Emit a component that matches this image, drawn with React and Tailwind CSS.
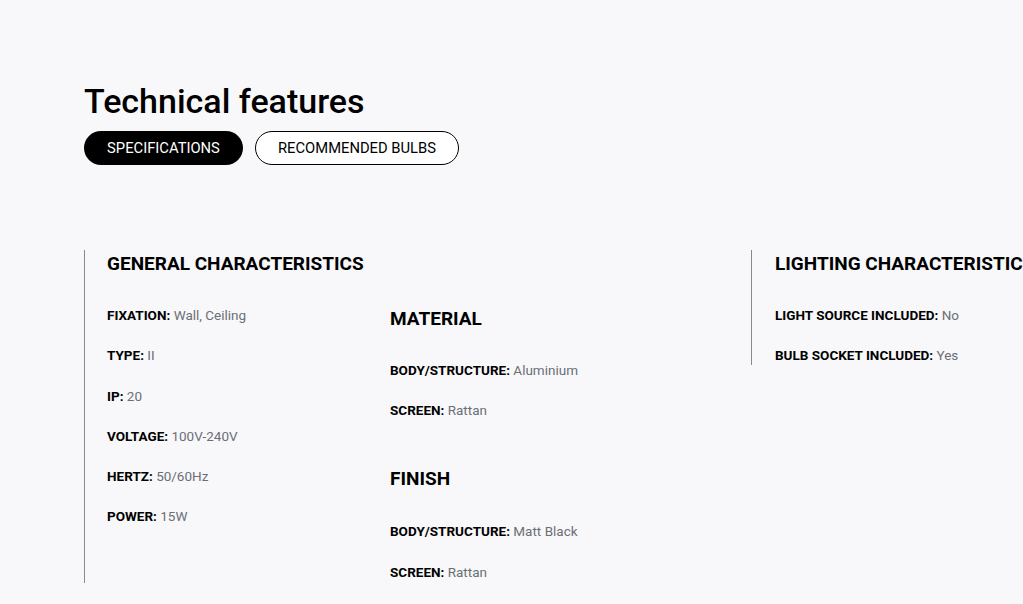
const general = [
  ['FIXATION', 'Wall, Ceiling'],
  ['TYPE', 'II'],
  ['IP', '20'],
  ['VOLTAGE', '100V-240V'],
  ['HERTZ', '50/60Hz'],
  ['POWER', '15W'],
];

const material = [
  ['BODY/STRUCTURE', 'Aluminium'],
  ['SCREEN', 'Rattan'],
];

const finish = [
  ['BODY/STRUCTURE', 'Matt Black'],
  ['SCREEN', 'Rattan'],
];

const lighting = [
  ['LIGHT SOURCE INCLUDED', 'No'],
  ['BULB SOCKET INCLUDED', 'Yes'],
];

function Item({ label, value }) {
  return (
    <p className="text-[13.5px] leading-5 whitespace-nowrap">
      <span className="font-bold text-black">{label}:</span>{' '}
      <span className="text-[#6b6f76]">{value}</span>
    </p>
  );
}

function ItemList({ items }) {
  return (
    <div className="flex flex-col gap-[20.3px]">
      {items.map(([label, value]) => (
        <Item key={label} label={label} value={value} />
      ))}
    </div>
  );
}

function Heading({ children }) {
  return <h3 className="text-[19px] leading-6 font-bold text-black whitespace-nowrap">{children}</h3>;
}

export default function App() {
  const font = { fontFamily: 'Roboto, "Liberation Sans", sans-serif' };

  return (
    <div className="min-h-[604px] w-[1023px] overflow-hidden bg-[#f8f8fa] pl-[84px] pt-[81px]" style={font}>
      <h1 className="text-[34px] leading-10 font-medium text-black">Technical features</h1>
      <div className="flex gap-3 mt-[10px]">
        <button className="h-[34px] w-[159px] rounded-full bg-black text-white text-[14.75px]">SPECIFICATIONS</button>
        <button className="h-[34px] w-[204px] rounded-full border border-black bg-white text-black text-[14.75px]">RECOMMENDED BULBS</button>
      </div>

      <div className="flex items-start mt-[85px]">
        <section className="w-[667px] shrink-0 border-l border-[#8a8a8a] pl-[22px] pt-[2px]">
          <Heading>GENERAL CHARACTERISTICS</Heading>
          <div className="flex mt-[29px]">
            <div className="w-[283px] shrink-0">
              <ItemList items={general} />
            </div>
            <div className="mt-[2px] pb-px">
              <Heading>MATERIAL</Heading>
              <div className="mt-[29px]">
                <ItemList items={material} />
              </div>
              <div className="mt-[47px]">
                <Heading>FINISH</Heading>
              </div>
              <div className="mt-[30px]">
                <ItemList items={finish} />
              </div>
            </div>
          </div>
        </section>

        <section className="shrink-0 border-l border-[#8a8a8a] pl-[23px] pt-[2px]">
          <Heading>LIGHTING CHARACTERISTICS</Heading>
          <div className="mt-[29px]">
            <ItemList items={lighting} />
          </div>
        </section>
      </div>
    </div>
  );
}
